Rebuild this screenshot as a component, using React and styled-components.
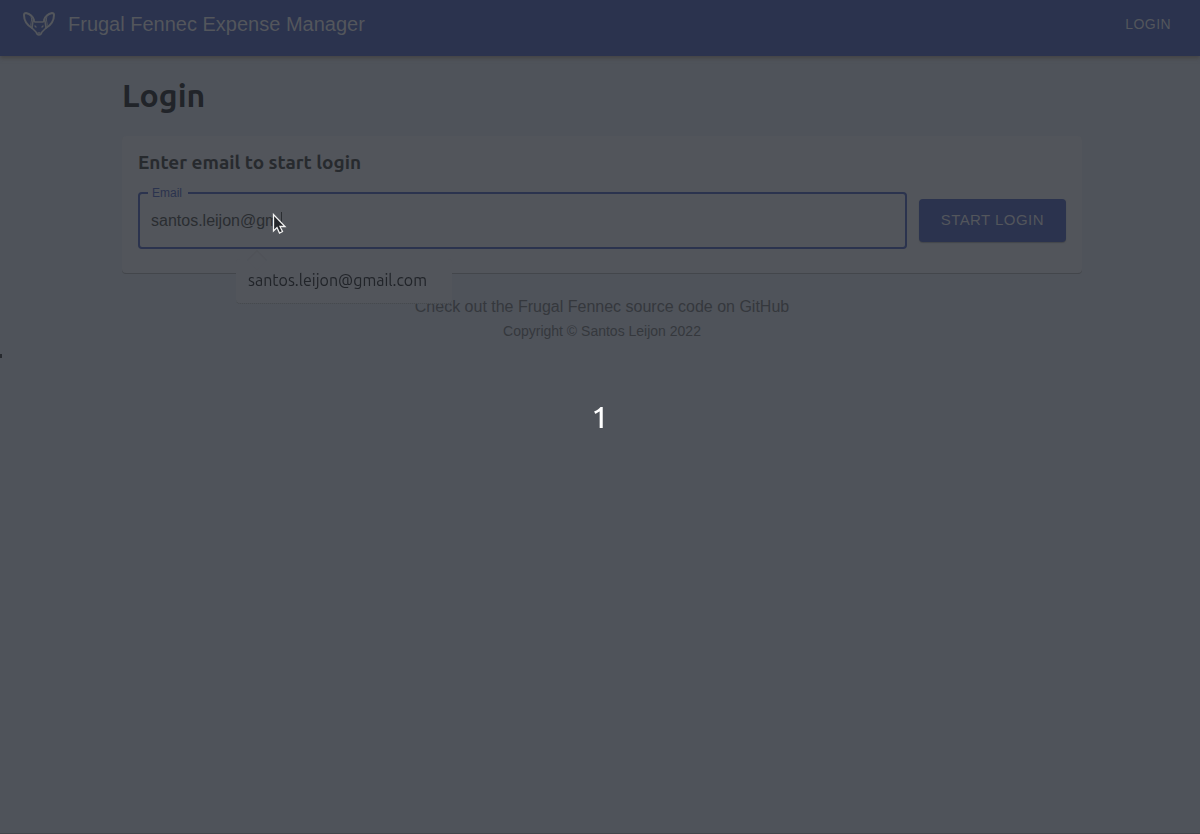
import React from "react";
import styled, { createGlobalStyle } from "styled-components";

const c = {
  page: "#4f535a",
  paper: "#52555b",
  primary: "#2b334e",
  onPrimary: "#53565c",
  heading: "#212429",
  title: "#272a2e",
  text: "#2a2d31",
  muted: "#35383d",
  edge: "#43464b",
};
const sans = '"Liberation Sans", Arial, sans-serif';
const display = 'Ubuntu, "Noto Sans", sans-serif';

const GlobalStyle = createGlobalStyle`
  *, *::before, *::after { box-sizing: border-box; }
  body { margin: 0; background: ${c.page}; font-family: ${sans}; }
  h1, h2, p { margin: 0; }
`;

const Page = styled.div`
  position: relative;
  min-height: 100vh;
  border-bottom: 1px solid ${c.edge};
`;

const AppBar = styled.header`
  display: flex;
  align-items: center;
  gap: 12px;
  height: 56px;
  padding: 0 23px 8px 22px;
  background: ${c.primary};
  color: ${c.onPrimary};
  box-shadow: 0 2px 4px #434344;
`;

const Logo = styled.svg`
  flex: none;
  width: 34px;
  height: 26px;
  fill: none;
  stroke: currentColor;
  stroke-width: 2;
  stroke-linejoin: round;
  stroke-linecap: round;
`;

const Brand = styled.span`
  flex: 1;
  font-size: 20px;
  line-height: 32px;
`;

const NavLink = styled.a`
  padding: 6px;
  color: inherit;
  font-size: 14px;
  line-height: 24px;
  letter-spacing: 0.03em;
  text-decoration: none;
  text-transform: uppercase;
`;

const Container = styled.div`
  padding-left: 4px;
`;

const Main = styled.main`
  width: 100%;
  max-width: 960px;
  margin: 0 auto;
  padding-top: 20px;
`;

const PageTitle = styled.h1`
  color: ${c.heading};
  font-family: ${display};
  font-size: 32px;
  font-weight: 700;
  line-height: 38px;
`;

const Card = styled.section`
  margin-top: 22px;
  padding: 16px 16px 24px;
  border-radius: 4px;
  background: ${c.paper};
  box-shadow: 0 1px 0 ${c.edge};
`;

const CardTitle = styled.h2`
  color: ${c.title};
  font-family: ${display};
  font-size: 19px;
  font-weight: 700;
  line-height: 20px;
`;

const Form = styled.form`
  display: flex;
  align-items: center;
  gap: 12px;
  margin-top: 20px;
`;

const Field = styled.div`
  position: relative;
  flex: 1;
  min-width: 0;
`;

const FieldLabel = styled.label`
  position: absolute;
  top: -6px;
  left: 10px;
  padding: 0 6px 0 4px;
  background: ${c.paper};
  color: ${c.primary};
  font-size: 12px;
  line-height: 14px;
`;

const Input = styled.input`
  display: block;
  width: 100%;
  height: 57px;
  padding: 0 11px;
  border: 2px solid ${c.primary};
  border-radius: 4px;
  outline: 0;
  background: transparent;
  color: ${c.text};
  font-family: ${sans};
  font-size: 16px;
`;

const Caret = styled.span`
  position: absolute;
  top: 20px;
  left: 143px;
  width: 1px;
  height: 17px;
  background: ${c.text};
`;

const Pointer = styled.svg`
  position: absolute;
  top: 21px;
  left: 134px;
  width: 15px;
  height: 22px;
`;

const Suggestions = styled.div`
  position: absolute;
  top: 67px;
  left: 98px;
  z-index: 1;
  width: 216px;
  padding: 8px 12px 10px;
  border-bottom: 1px dotted ${c.edge};
  border-radius: 4px;
  background: ${c.paper};

  &::before {
    content: "";
    position: absolute;
    top: -6px;
    left: 14px;
    width: 14px;
    height: 14px;
    background: ${c.paper};
    border: 1px solid #505359;
    border-width: 1px 0 0 1px;
    transform: rotate(45deg);
  }
`;

const Suggestion = styled.button`
  position: relative;
  display: block;
  width: 100%;
  padding: 0;
  border: 0;
  background: none;
  color: ${c.heading};
  font-family: ${display};
  font-size: 16px;
  font-weight: 400;
  line-height: 26px;
  text-align: left;
`;

const SubmitButton = styled.button`
  height: 43px;
  padding: 0 22px 2px;
  border: 0;
  border-radius: 4px;
  background: ${c.primary};
  color: ${c.onPrimary};
  box-shadow: 0 1px 1px ${c.edge};
  font-family: ${sans};
  font-size: 15px;
  letter-spacing: 0.03em;
  text-transform: uppercase;
`;

const Footer = styled.footer`
  padding-top: 20px;
  color: ${c.muted};
  text-align: center;
`;

const SourceLink = styled.a`
  display: block;
  color: inherit;
  font-size: 16px;
  line-height: 28px;
  text-decoration: none;
`;

const Copyright = styled.p`
  font-size: 14px;
  line-height: 20px;
`;

const Countdown = styled.div`
  position: fixed;
  inset: 0;
  display: flex;
  align-items: center;
  justify-content: center;
  color: #fff;
  font-family: ${display};
  font-size: 30px;
  font-weight: 500;
  line-height: 34px;
  pointer-events: none;
`;

const EdgeMark = styled.span`
  position: absolute;
  top: 354px;
  left: 0;
  width: 2px;
  height: 4px;
  background: #26292e;
`;

function FennecLogo() {
  return (
    <Logo viewBox="0 0 34 26" aria-hidden="true">
      <path d="M10 17C5 14 2 9 2 4Q2 2 4 2C8 3 11 6 12 9" />
      <path d="M24 17C29 14 32 9 32 4Q32 2 30 2C26 3 23 6 22 9" />
      <path d="M9 6C11 9 8 11 9 16M25 6C23 9 26 11 25 16" strokeWidth="1" />
      <path d="M11 9L13 11H21L23 9M11 10L10 17L14 21Q15 24 17 24Q19 24 20 21L24 17L23 10" strokeWidth="1.6" />
      <path d="M13 15L14 16M21 15L20 16M16 22H18" strokeWidth="1.4" />
    </Logo>
  );
}

export default function App() {
  return (
    <Page>
      <GlobalStyle />
      <AppBar>
        <FennecLogo />
        <Brand>Frugal Fennec Expense Manager</Brand>
        <NavLink href="#login">Login</NavLink>
      </AppBar>
      <Container>
        <Main>
          <PageTitle>Login</PageTitle>
          <Card>
            <CardTitle>Enter email to start login</CardTitle>
            <Form onSubmit={(e) => e.preventDefault()}>
              <Field>
                <Input id="email" type="text" defaultValue="santos.leijon@gm" autoComplete="off" />
                <FieldLabel htmlFor="email">Email</FieldLabel>
                <Caret />
                <Suggestions>
                  <Suggestion type="button">santos.leijon@gmail.com</Suggestion>
                </Suggestions>
                <Pointer viewBox="0 0 15 22" aria-hidden="true">
                  <path
                    d="M1.5 1.5V18L5 14.5L7.5 20L10.5 18.5L8 13.5H13Z"
                    fill="#24262a"
                    stroke="#f2f2f2"
                    strokeWidth="1.3"
                  />
                </Pointer>
              </Field>
              <SubmitButton type="submit">Start login</SubmitButton>
            </Form>
          </Card>
          <Footer>
            <SourceLink href="#source">Check out the Frugal Fennec source code on GitHub</SourceLink>
            <Copyright>Copyright © Santos Leijon 2022</Copyright>
          </Footer>
        </Main>
      </Container>
      <EdgeMark />
      <Countdown>1</Countdown>
    </Page>
  );
}
